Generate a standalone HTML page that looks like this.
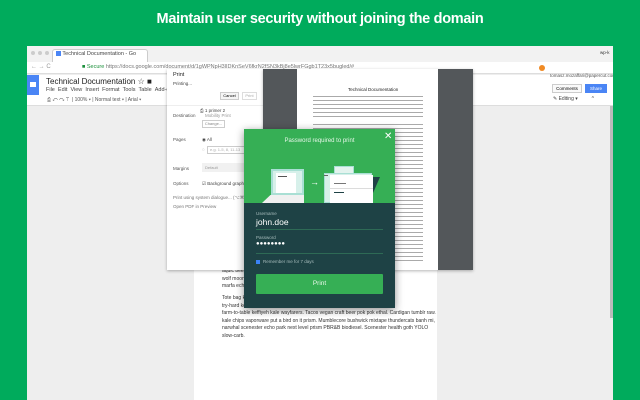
<!DOCTYPE html>
<html><head><meta charset="utf-8"><style>
*{margin:0;padding:0;box-sizing:border-box}
body{width:640px;height:400px;overflow:hidden;background:#00ab5c;font-family:"Liberation Sans",sans-serif;position:relative}
.a{position:absolute}
.t{font-size:7px;color:#444;white-space:nowrap}
.lines{background:repeating-linear-gradient(#fff 0 1px,#aaa 1px 2px,#fff 2px 4px)}
</style></head><body>
<div class="a" style="left:0;top:11px;width:640px;text-align:center;color:#fff;font-size:14.5px;font-weight:bold;letter-spacing:-0.3px">Maintain user security without joining the domain</div>
<!-- browser -->
<div class="a" style="left:27px;top:46px;width:586px;height:354px;background:#eee;overflow:hidden">
 <div class="a" style="left:0;top:0;width:586px;height:16px;background:#f2f2f2"></div>
 <div class="a" style="left:4px;top:5px;width:4px;height:4px;border-radius:50%;background:#ccc"></div>
 <div class="a" style="left:11px;top:5px;width:4px;height:4px;border-radius:50%;background:#ccc"></div>
 <div class="a" style="left:18px;top:5px;width:4px;height:4px;border-radius:50%;background:#ccc"></div>
 <div class="a" style="left:25px;top:3px;width:96px;height:13px;background:#fff;border:1px solid #ccc;border-bottom:none;border-radius:3px 3px 0 0"></div>
 <div class="a t" style="left:29px;top:5px;font-size:5.5px"><span style="display:inline-block;width:5px;height:5px;background:#4a85f5;vertical-align:middle"></span> Technical Documentation - Go</div>
 <div class="a t" style="left:573px;top:4px;font-size:4.5px;color:#333">wp-k</div>
 <div class="a" style="left:0;top:16px;width:586px;height:12px;background:#fff;border-bottom:1px solid #ddd"></div>
 <div class="a t" style="left:4px;top:18px;font-size:6px;color:#999">← → C</div>
 <div class="a t" style="left:55px;top:18px;font-size:5.5px;color:#1a8f3a">■ Secure <span style="color:#777">https://docs.google.com/document/d/1gWPNpH3lIDKnSeV6fkrN2fSN3kBj8e5lwrFGgb1T23x5bugled/#</span></div>
 <div class="a" style="left:512px;top:19px;width:6px;height:6px;border-radius:50%;background:#f08a24"></div>
 <!-- docs header -->
 <div class="a" style="left:0;top:29px;width:586px;height:30px;background:#fff"></div>
 <div class="a" style="left:0;top:29px;width:12px;height:20px;background:#4a85f5"></div>
 <div class="a" style="left:3px;top:36px;width:6px;height:5px;background:#fff"></div>
 <div class="a t" style="left:19px;top:31px;font-size:8px;color:#222">Technical Documentation ☆ ■</div>
 <div class="a t" style="left:19px;top:41px;font-size:5.5px">File &nbsp;Edit &nbsp;View &nbsp;Insert &nbsp;Format &nbsp;Tools &nbsp;Table &nbsp;Add-ons &nbsp;He</div>
 <div class="a t" style="left:20px;top:51px;font-size:5px;color:#555">⎙ ↶ ↷ ⊤ &nbsp;| 100% ▾ | Normal text ▾ | Arial ▾</div>
 <div class="a t" style="left:523px;top:27px;font-size:4.5px;color:#555">tomasz.mozaffari@papercut.com ▾</div>
 <div class="a" style="left:525px;top:38px;width:30px;height:9px;border:1px solid #ccc;background:#fafafa;font-size:4.5px;text-align:center;line-height:7px">Comments</div>
 <div class="a" style="left:558px;top:38px;width:22px;height:9px;background:#4a85f5;color:#fff;font-size:4.5px;text-align:center;line-height:9px">Share</div>
 <div class="a t" style="left:526px;top:50px;font-size:5px">✎ Editing ▾ &nbsp;&nbsp;&nbsp;&nbsp;&nbsp;&nbsp;&nbsp;&nbsp;&nbsp;^</div>
 <div class="a" style="left:0;top:59px;width:586px;height:1px;background:#ddd"></div>
 <!-- doc page -->
 <div class="a" style="left:167px;top:60px;width:243px;height:300px;background:#fff"></div>
 <div class="a t" style="left:195px;top:222px;font-size:5px;line-height:7.5px;color:#333">aquic beer<br>wolf moon<br>marfa echo</div>
 <div class="a t" style="left:195px;top:249px;font-size:5px;line-height:7.5px;color:#333">Tote bag ko<br>try-hard keg<br>farm-to-table keffiyeh kale wayfarers. Tacos vegan craft beer pok pok ethal. Cardigan tumblr raw.<br>kale chips vaporware put a bird on it prism. Mumblecore bushwick mixtape thundercats banh mi,<br>narwhal scenester echo park next level prism PBR&amp;B biodiesel. Scenester health goth YOLO<br>slow-carb.</div>
 <div class="a" style="left:583px;top:60px;width:3px;height:212px;background:#bbb"></div>
 <div class="a" style="left:570px;top:361px;width:10px;height:10px;background:#fff;border:1px solid #ddd"></div>
 <div class="a" style="left:573px;top:364px;width:4px;height:4px;background:#555"></div>
</div>
<!-- print panel -->
<div class="a" style="left:167px;top:69px;width:96px;height:201px;background:#fff;box-shadow:0 1px 3px rgba(0,0,0,.3)">
 <div class="a t" style="left:6px;top:3px;font-size:5.5px;color:#222">Print</div>
 <div class="a t" style="left:6px;top:12px;font-size:4.5px">Printing...</div>
 <div class="a" style="left:53px;top:23px;width:19px;height:8px;border:1px solid #ccc;font-size:4px;text-align:center;line-height:6px;background:#f5f5f5">Cancel</div>
 <div class="a" style="left:75px;top:23px;width:15px;height:8px;border:1px solid #ddd;font-size:4px;text-align:center;line-height:6px;color:#aaa">Print</div>
 <div class="a" style="left:0;top:36px;width:96px;height:1px;background:#eee"></div>
 <div class="a t" style="left:6px;top:44px;font-size:4.5px;color:#555">Destination</div>
 <div class="a t" style="left:6px;top:68px;font-size:4.5px;color:#555">Pages</div>
 <div class="a t" style="left:6px;top:97px;font-size:4.5px;color:#555">Margins</div>
 <div class="a t" style="left:6px;top:112px;font-size:4.5px;color:#555">Options</div>
 <div class="a t" style="left:33px;top:39px;font-size:4.5px;line-height:5px">⎙ 1 primer 2<br>&nbsp;&nbsp;&nbsp;&nbsp;<span style="color:#999">Mobility Print</span></div>
 <div class="a" style="left:35px;top:51px;width:23px;height:8px;border:1px solid #ccc;font-size:4px;line-height:6px;text-align:center;color:#888">Change...</div>
 <div class="a t" style="left:35px;top:68px;font-size:4.5px">◉ All</div>
 <div class="a t" style="left:35px;top:78px;font-size:4.5px;color:#bbb">○</div>
 <div class="a" style="left:40px;top:77px;width:56px;height:8px;border:1px solid #ccc;font-size:4px;line-height:6px;padding-left:2px;color:#aaa">e.g. 1-5, 8, 11-13</div>
 <div class="a" style="left:35px;top:94px;width:61px;height:9px;background:#f1f1f1;font-size:4px;line-height:9px;padding-left:3px;color:#999">Default</div>
 <div class="a t" style="left:35px;top:112px;font-size:4.5px">☑ Background graphics</div>
 <div class="a t" style="left:6px;top:124px;font-size:4.5px;line-height:9px;color:#777">Print using system dialogue... (⌥⌘P)<br>Open PDF in Preview</div>
</div>
<!-- preview -->
<div class="a" style="left:263px;top:69px;width:210px;height:201px;background:#53575a;box-shadow:0 1px 3px rgba(0,0,0,.3)"></div>
<div class="a" style="left:297px;top:69px;width:141px;height:201px;background:#fff"></div>
<div class="a t" style="left:348px;top:87px;font-size:4.5px;color:#222">Technical Documentation</div>
<div class="a lines" style="left:313px;top:95px;width:110px;height:24px"></div>
<div class="a lines" style="left:313px;top:123px;width:110px;height:140px"></div>
<!-- modal -->
<div class="a" style="left:244px;top:129px;width:151px;height:179px;background:#1e4245;box-shadow:0 2px 8px rgba(0,0,0,.45)">
 <div class="a" style="left:0;top:0;width:151px;height:74px;background:#36af55"></div>
 <div class="a" style="left:0;top:9px;width:151px;text-align:center;color:#e6f6e8;font-size:6px">Password required to print</div>
 <div class="a" style="left:140px;top:2px;color:#fff;font-size:10px">✕</div>
 <div class="a" style="left:27px;top:40px;width:33px;height:26px;background:#d7f0ea;border:2px solid #a9dfd4"></div>
 <div class="a" style="left:32px;top:44px;width:20px;height:20px;background:#fff"></div>
 <div class="a" style="left:34px;top:47px;width:9px;height:1px;background:#555"></div>
 <div class="a" style="left:18px;top:66px;width:42px;height:8px;background:#f0f0f0;clip-path:polygon(20% 0,100% 0,100% 100%,0 100%)"></div>
 <div class="a" style="left:66px;top:48px;color:#fff;font-size:9px">→</div>
 <div class="a" style="left:90px;top:37px;width:20px;height:9px;background:#e3f3ee;border:1px solid #a9dfd4"></div>
 <div class="a" style="left:80px;top:44px;width:48px;height:30px;background:#d7f0ea;border:1px solid #a9dfd4"></div>
 <div class="a" style="left:86px;top:46px;width:43px;height:28px;background:#fff"></div>
 <div class="a" style="left:80px;top:46px;width:4px;height:1px;background:#666"></div>
 <div class="a" style="left:90px;top:54px;width:12px;height:1px;background:#777"></div>
 <div class="a" style="left:90px;top:63px;width:10px;height:1px;background:#1e4245"></div>
 <div class="a" style="left:86px;top:59px;width:43px;height:1px;background:#dcdcdc"></div>
 <div class="a" style="left:129px;top:48px;width:7px;height:16px;background:#1e4245;clip-path:polygon(0 0,100% 0,0 100%)"></div>
 <div class="a" style="left:12px;top:82px;color:#a7bcbc;font-size:4.5px">Username</div>
 <div class="a" style="left:12px;top:88px;color:#fff;font-size:8.5px">john.doe</div>
 <div class="a" style="left:12px;top:100px;width:127px;height:1px;background:#2e6a55"></div>
 <div class="a" style="left:12px;top:106px;color:#a7bcbc;font-size:4.5px">Password</div>
 <div class="a" style="left:12px;top:112px;color:#fff;font-size:6px;letter-spacing:0">●●●●●●●●</div>
 <div class="a" style="left:12px;top:124px;width:127px;height:1px;background:#2e6a55"></div>
 <div class="a" style="left:12px;top:131px;width:4px;height:4px;background:#3b82f6"></div>
 <div class="a" style="left:19px;top:130px;color:#a7bcbc;font-size:4.5px">Remember me for 7 days</div>
 <div class="a" style="left:12px;top:145px;width:127px;height:20px;background:#36af55;border-radius:1px;color:#e9f8ea;font-size:6.5px;text-align:center;line-height:20px">Print</div>
</div>
</body></html>
